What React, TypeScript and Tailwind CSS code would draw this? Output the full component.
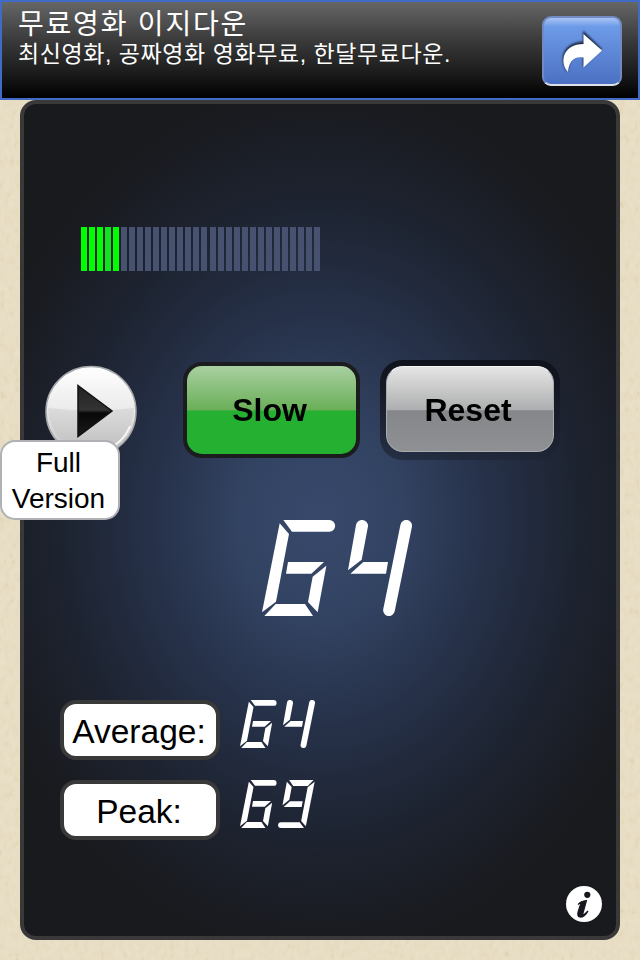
const BAR_COUNT = 30;
const LIT_BARS = 5;

// Segment outlines of a seven-segment "6"; turned by 180 degrees it is the "9".
const SIX = [
  "M130 60H268a17.5 17.5 0 0 1 0 35H156Z",
  "M119 70L147 102L108 305L66 337Z",
  "M144 186H252L214 221H138Z",
  "M259 197L233 337L204 306L218 230Z",
  "M107 312H195L219 348H73Z",
];

function Six() {
  return (
    <>
      {SIX.map((d) => (
        <path key={d} d={d} />
      ))}
    </>
  );
}

function Readout({ last, className }: { last: 4 | 9; className: string }) {
  return (
    <svg viewBox="66 60 450 288" fill="#fff" className={className} aria-label={`6${last}`}>
      <Six />
      {last === 9 ? (
        <g transform="translate(580 408) rotate(180)">
          <Six />
        </g>
      ) : (
        <>
          <path d="M348 75a18 17 0 0 1 36 4L365 179L324 211Z" />
          <path d="M370 186H444L438 221H331Z" />
          <path d="M498.500 77.500L447 330.500" stroke="#fff" strokeWidth="35" strokeLinecap="round" />
        </>
      )}
    </svg>
  );
}

function PaperGrain() {
  return (
    <svg
      className="pointer-events-none absolute inset-0 h-full w-full opacity-30 mix-blend-soft-light"
      aria-hidden="true"
    >
      <filter id="paper" x="0" y="0" width="100%" height="100%">
        <feTurbulence type="fractalNoise" baseFrequency="0.2 0.12" numOctaves="3" />
        <feColorMatrix values="1.5 0 0 0 -.25  1.5 0 0 0 -.25  1.5 0 0 0 -.25  0 0 0 0 1" />
      </filter>
      <rect width="100%" height="100%" filter="url(#paper)" />
    </svg>
  );
}

function AdBanner() {
  return (
    <header className="relative flex h-[100px] justify-between border-2 border-[#426bc7] bg-[linear-gradient(#666_0%,#3a3a3a_40%,#1a1a1a_75%,#000_100%)] px-4 text-white">
      <div className="pt-[6px] font-['Liberation_Sans','Noto_Sans_CJK_KR',sans-serif]">
        <div className="h-[32px] w-max text-[28px] leading-[34px] tracking-[1.8px]">무료영화 이지다운</div>
        <div className="w-max text-[23px] leading-[28px] tracking-[0.57px]">
          최신영화, 공짜영화 영화무료, 한달무료다운.
        </div>
      </div>
      <button
        type="button"
        aria-label="Open"
        className="mt-[14px] flex h-[70px] w-[80px] items-center justify-center rounded-[9px] border-2 border-[#718bc2] border-b-[#dde0e8] bg-[linear-gradient(#a9c4f5_0%,#6d9be8_13%,#4b70c2_100%)]"
      >
        <svg viewBox="0 0 42 44" className="h-[44px] w-[42px] overflow-visible">
          <path
            d="M22 1.500L41 20L22 38V27C14 26 8 29 7 43C-2 34 -1 14 22 12.500Z"
            fill="#1c2840"
            className="blur-[1px]"
          />
          <path
            d="M22.500 5L41 21.500L22.500 38.500V28.500C14 27 8 31 7 43C-2 33 2 15 22.500 15Z"
            fill="#fff"
          />
        </svg>
      </button>
    </header>
  );
}

function LevelMeter() {
  return (
    <div className="flex h-[44px] w-[239px] justify-between">
      {Array.from({ length: BAR_COUNT }, (_, i) => (
        <div
          key={i}
          className={`w-[6px] ${i === 3 ? "bg-[#12e321]" : i < LIT_BARS ? "bg-[#00ff00]" : "bg-[#475170]"}`}
        />
      ))}
    </div>
  );
}

function PlayButton() {
  return (
    <svg viewBox="0 0 92 92" className="h-[92px] w-[92px]" role="button" aria-label="Play">
      <defs>
        <linearGradient id="ball" x2="0" y2="1">
          <stop offset="0" stopColor="#fff" />
          <stop offset=".45" stopColor="#ececec" />
          <stop offset="1" stopColor="#bcbcbc" />
        </linearGradient>
        <linearGradient id="arrow" x2="0" y2="1">
          <stop offset="0" stopColor="#222" />
          <stop offset=".48" stopColor="#333" />
          <stop offset=".54" stopColor="#080808" />
          <stop offset="1" stopColor="#1b1b1b" />
        </linearGradient>
      </defs>
      <circle cx="46" cy="46.500" r="45" fill="url(#ball)" stroke="#a5a7ab" strokeWidth="1.500" />
      <path d="M3 43Q46 48 89 43A43 43 0 0 1 3 43Z" fill="#b8b8b8" opacity=".3" />
      <path d="M70 80A42 42 0 0 0 85 61" fill="none" stroke="#f6f6f6" strokeWidth="2" />
      <path d="M33 20.500L67 46L33 71.500Z" fill="url(#arrow)" stroke="#111" strokeWidth="1.500" />
    </svg>
  );
}

function StatRow({ label, last }: { label: string; last: 4 | 9 }) {
  return (
    <div className="flex h-[60px] gap-5">
      <div className="flex w-[160px] items-center justify-center rounded-[16px] border-4 border-[#393939] bg-white pt-[3px] pr-[2px] text-[33.5px] leading-none text-black">
        {label}
      </div>
      <Readout last={last} className="h-[48px] w-[75px]" />
    </div>
  );
}

export default function App() {
  return (
    <div className="relative h-[960px] w-[640px] overflow-hidden bg-[#e6dbc0] font-['Liberation_Sans',Arial,sans-serif]">
      <PaperGrain />
      <AdBanner />
      <main className="relative mx-5 h-[840px] overflow-hidden rounded-[16px] border-4 border-[#393939] bg-[radial-gradient(ellipse_350px_430px_at_50%_50%,#38496c_0%,#324261_24%,#263149_48%,#1d2330_74%,#191a1e_100%)]">
        <div className="pl-[57px] pt-[123px]">
          <LevelMeter />
        </div>
        <div className="mt-[89px] flex pl-[21px]">
          <div className="mt-[5px]">
            <PlayButton />
          </div>
          <button
            type="button"
            className="ml-[46px] mt-[2px] h-[96px] w-[177px] rounded-[19px] border-4 border-[#1b1c1e] bg-[linear-gradient(#a9d0a1_0%,#6aaf58_50%,#25b032_51%,#25b032_100%)] pr-1 text-[32px] font-bold text-black"
          >
            Slow
          </button>
          <div className="ml-[20px] h-[100px] w-[180px] rounded-[22px] bg-[linear-gradient(#10131c,#1d243399)] p-[6px] pb-[8px]">
            <button
              type="button"
              className="h-full w-full rounded-[17px] border border-[#aaacb0] border-t-[#f5f5f5] bg-[linear-gradient(#e5e5e5_0%,#adaeaf_51%,#85878b_52%,#8f9094_100%)] pt-[2px] pr-1 text-[32px] font-bold text-black"
            >
              Reset
            </button>
          </div>
        </div>
        <div className="mt-[60px] pl-[238px]">
          <Readout last={4} className="h-[96px] w-[150px]" />
        </div>
        <div className="mt-[84px] flex flex-col gap-5 pl-[36px]">
          <StatRow label="Average:" last={4} />
          <StatRow label="Peak:" last={9} />
        </div>
        <div className="mr-[14px] mt-[46px] flex justify-end">
          <svg viewBox="0 0 36 36" className="h-[36px] w-[36px]" role="button" aria-label="Info">
            <circle cx="18" cy="18" r="18" fill="#fff" />
            <circle cx="21.300" cy="8.800" r="3.100" fill="#17181d" />
            <path
              d="M12 18.500C14 16 16 14.800 20.500 14.500L17 27C16.500 30 18.500 28.500 22 25C20 29 16.500 31.500 14 31C11.500 30.500 11.500 28 12.200 25.500L14.500 18.500C15 16.500 14 17 12 18.500Z"
              fill="#17181d"
              stroke="#17181d"
              strokeWidth="1.200"
            />
          </svg>
        </div>
      </main>
      <button
        type="button"
        className="absolute left-0 top-[440px] h-[80px] w-[120px] rounded-[15px] border-2 border-[#b0b1b5] bg-white pr-[3px] pt-[2px] text-[28px] leading-[36px] text-black"
      >
        Full
        <br />
        Version
      </button>
    </div>
  );
}
